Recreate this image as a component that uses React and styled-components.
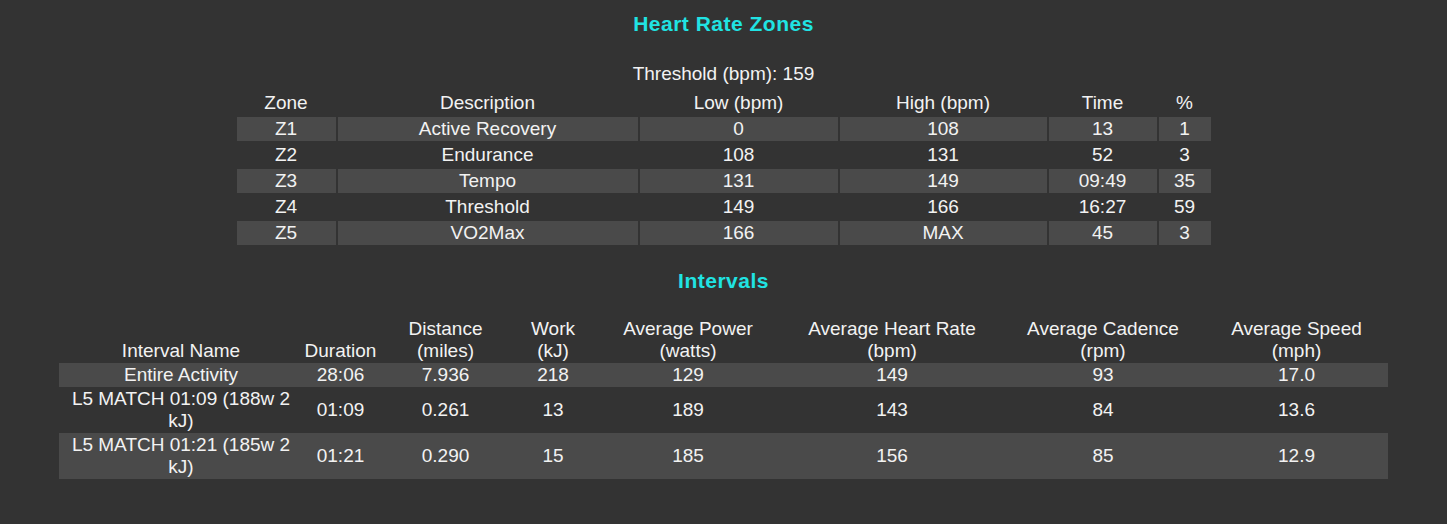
import React from 'react';
import styled, { createGlobalStyle } from 'styled-components';

const GlobalStyle = createGlobalStyle`
  html, body {
    margin: 0;
    padding: 0;
    background-color: #333333;
  }

  body {
    font-family: "Liberation Sans", Arial, sans-serif;
    font-size: 19px;
    color: #f2f2f2;
  }
`;

const Page = styled.div`
  display: flex;
  flex-direction: column;
  align-items: center;
  padding-top: 12px;
  min-height: 524px;
  box-sizing: border-box;
`;

const SectionTitle = styled.h3`
  margin: ${({ $top }) => $top || '0'} 0 0;
  font-size: 21px;
  line-height: 24px;
  font-weight: 700;
  letter-spacing: 0.5px;
  color: #20e3e3;
  text-align: center;
`;

const Threshold = styled.div`
  margin-top: 27px;
  text-align: center;
`;

const ZoneTable = styled.table`
  margin-top: 4px;
  border-collapse: separate;
  border-spacing: 2px;
  table-layout: fixed;
  width: 978px;
`;

const IntervalTable = styled.table`
  margin-top: 24px;
  border-collapse: collapse;
  border-spacing: 0;
  table-layout: fixed;
  width: 1329px;
`;

const HeadCell = styled.th`
  padding: 1px;
  font-weight: 400;
  text-align: center;
  vertical-align: bottom;
`;

const Cell = styled.td`
  padding: 1px;
  text-align: center;
  vertical-align: middle;
  background-color: ${({ $shaded }) => ($shaded ? '#4a4a4a' : 'transparent')};
`;

const Unit = styled.span`
  display: block;
`;

const zoneCols = [99, 300, 198, 207, 108, 52];
const zoneHead = ['Zone', 'Description', 'Low (bpm)', 'High (bpm)', 'Time', '%'];

const zones = [
  ['Z1', 'Active Recovery', '0', '108', '13', '1'],
  ['Z2', 'Endurance', '108', '131', '52', '3'],
  ['Z3', 'Tempo', '131', '149', '09:49', '35'],
  ['Z4', 'Threshold', '149', '166', '16:27', '59'],
  ['Z5', 'VO2Max', '166', 'MAX', '45', '3'],
];

const intervalCols = [244, 75, 135, 80, 190, 218, 204, 183];
const intervalHead = [
  { label: 'Interval Name' },
  { label: 'Duration' },
  { label: 'Distance', unit: '(miles)' },
  { label: 'Work', unit: '(kJ)' },
  { label: 'Average Power', unit: '(watts)' },
  { label: 'Average Heart Rate', unit: '(bpm)' },
  { label: 'Average Cadence', unit: '(rpm)' },
  { label: 'Average Speed', unit: '(mph)' },
];

const intervals = [
  ['Entire Activity', '28:06', '7.936', '218', '129', '149', '93', '17.0'],
  ['L5 MATCH 01:09 (188w 2 kJ)', '01:09', '0.261', '13', '189', '143', '84', '13.6'],
  ['L5 MATCH 01:21 (185w 2 kJ)', '01:21', '0.290', '15', '185', '156', '85', '12.9'],
];

const App = () => {
  return (
    <>
      <GlobalStyle />
      <Page>
        <SectionTitle>Heart Rate Zones</SectionTitle>
        <Threshold>Threshold (bpm): 159</Threshold>
        <ZoneTable>
          <colgroup>
            {zoneCols.map((w, i) => (
              <col key={i} style={{ width: w }} />
            ))}
          </colgroup>
          <thead>
            <tr>
              {zoneHead.map((h) => (
                <HeadCell key={h}>{h}</HeadCell>
              ))}
            </tr>
          </thead>
          <tbody>
            {zones.map((row, r) => (
              <tr key={row[0]}>
                {row.map((value, c) => (
                  <Cell key={c} $shaded={r % 2 === 0}>
                    {value}
                  </Cell>
                ))}
              </tr>
            ))}
          </tbody>
        </ZoneTable>

        <SectionTitle $top="22px">Intervals</SectionTitle>
        <IntervalTable>
          <colgroup>
            {intervalCols.map((w, i) => (
              <col key={i} style={{ width: w }} />
            ))}
          </colgroup>
          <thead>
            <tr>
              {intervalHead.map((h) => (
                <HeadCell key={h.label}>
                  {h.label}
                  {h.unit && <Unit>{h.unit}</Unit>}
                </HeadCell>
              ))}
            </tr>
          </thead>
          <tbody>
            {intervals.map((row, r) => (
              <tr key={row[0]}>
                {row.map((value, c) => (
                  <Cell key={c} $shaded={r % 2 === 0}>
                    {value}
                  </Cell>
                ))}
              </tr>
            ))}
          </tbody>
        </IntervalTable>
      </Page>
    </>
  );
};

export default App;
